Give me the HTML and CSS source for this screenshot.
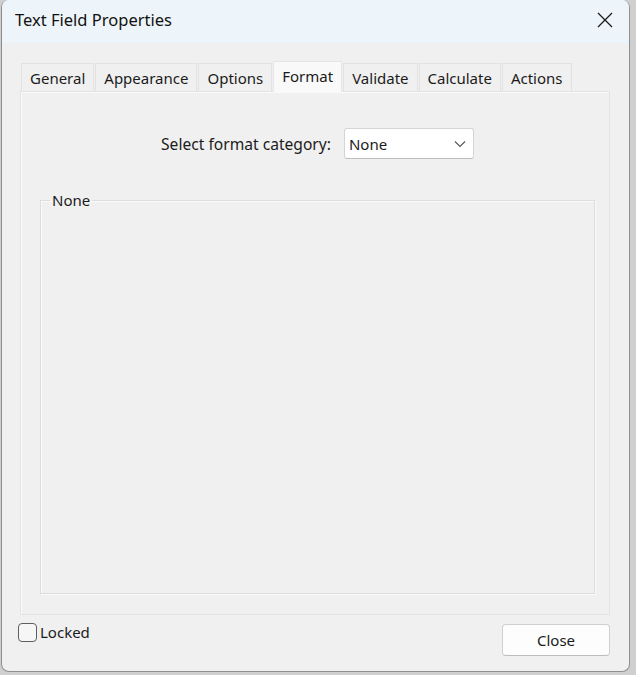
FILE: index.html
```html
<html lang="en">
<head>
    <meta charset="UTF-8">
    <meta name="viewport" content="width=device-width, initial-scale=1.0">
    <title>Text Field Properties</title>
    <link rel="stylesheet" href="styles.css">
</head>
<body>
    <div class="window">
        <div class="titlebar">
            <span class="title">Text Field Properties</span>
            <span class="close_x">
                <svg width="16" height="16" viewBox="0 0 16 16">
                    <path d="M1 1 L15 15 M15 1 L1 15" stroke="#1a1a1a" stroke-width="1.3" fill="none" />
                </svg>
            </span>
        </div>
        <div class="content">
            <div class="tabs">
                <div class="tab">General</div>
                <div class="tab">Appearance</div>
                <div class="tab">Options</div>
                <div class="tab active">Format</div>
                <div class="tab">Validate</div>
                <div class="tab">Calculate</div>
                <div class="tab">Actions</div>
            </div>
            <div class="panel">
                <div class="category_row">
                    <label for="category">Select format category:</label>
                    <div class="select" id="category">
                        <span>None</span>
                        <svg width="12" height="8" viewBox="0 0 12 8">
                            <path d="M1 1.5 L6 6.5 L11 1.5" stroke="#555" stroke-width="1.1" fill="none" />
                        </svg>
                    </div>
                </div>
                <fieldset class="group">
                    <legend>None</legend>
                </fieldset>
            </div>
            <div class="footer">
                <label class="check">
                    <span class="box"></span>
                    <span>Locked</span>
                </label>
                <button class="btn">Close</button>
            </div>
        </div>
    </div>
</body>
</html>
```

FILE: styles.css
```css
html, body {
    margin: 0;
    height: 100%;
}
body {
    background-color: #cfcfcf;
    font-family: "Noto Sans", "Open Sans", sans-serif;
    font-size: 14px;
    color: #1b1b1b;
}
.window {
    width: 627px;
    height: 671px;
    margin-left: 1px;
    background-color: #f0f0f0;
    border: 1px solid #8e8e8e;
    border-top: none;
    border-radius: 8px;
    display: flex;
    flex-direction: column;
    overflow: hidden;
}
.titlebar {
    height: 43px;
    flex: none;
    background-color: #eef5fa;
    display: flex;
    align-items: center;
    justify-content: space-between;
    padding: 0 16px 4px 13px;
    box-sizing: border-box;
}
.title {
    font-size: 16.5px;
    color: #111;
}
.close_x {
    display: flex;
}
.content {
    flex: 1;
    display: flex;
    flex-direction: column;
    padding: 18px 19px 0 18px;
}
.tabs {
    display: flex;
    align-items: flex-end;
    height: 30px;
    padding-left: 1px;
    position: relative;
    z-index: 1;
}
.tab {
    height: 28px;
    box-sizing: border-box;
    padding: 2px 8px 0 8px;
    border: 1px solid #e2e2e2;
    border-bottom: none;
    margin-right: 1px;
    background-color: #f0f0f0;
    display: flex;
    align-items: center;
    font-size: 15px;
    line-height: 1;
}
.tab.active {
    height: 31px;
    margin-bottom: -1px;
    background-color: #f9f9f9;
    border-color: #e6e6e6;
    padding-bottom: 4px;
}
.panel {
    height: 524px;
    box-sizing: border-box;
    border: 1px solid #e3e3e3;
    box-shadow: inset 1px 1px 0 #fafafa;
    background-color: #f0f0f0;
    padding: 0 14px 0 19px;
    display: flex;
    flex-direction: column;
}
.category_row {
    display: flex;
    justify-content: center;
    align-items: center;
    column-gap: 13px;
    margin-top: 36px;
    font-size: 15.6px;
}
.select {
    width: 130px;
    height: 31px;
    box-sizing: border-box;
    background-color: #fff;
    border: 1px solid #d4d4d4;
    border-bottom-color: #bdbdbd;
    border-radius: 3px;
    display: flex;
    align-items: center;
    justify-content: space-between;
    padding: 0 7px 0 4px;
    font-size: 15px;
}
.group {
    margin: 31px 0 0 0;
    padding: 0;
    height: 404px;
    box-sizing: border-box;
    border: 1px solid #dcdcdc;
    box-shadow: 1px 1px 0 #fafafa, inset 1px 1px 0 #fafafa;
}
.group legend {
    margin-left: 9px;
    padding: 0 2px;
    font-size: 15px;
}
.footer {
    display: flex;
    justify-content: space-between;
    align-items: flex-start;
    padding: 9px 0 0 0;
    margin-left: -2px;
}
.check {
    display: flex;
    align-items: center;
    column-gap: 3px;
    margin-top: -2px;
    font-size: 15px;
}
.box {
    width: 19px;
    height: 19px;
    box-sizing: border-box;
    border: 1px solid #5f5f5f;
    border-radius: 4px;
    background-color: #f6f6f6;
}
.btn {
    width: 108px;
    height: 32px;
    background-color: #fdfdfd;
    border: 1px solid #d0d0d0;
    border-bottom-color: #bcbcbc;
    border-radius: 4px;
    font-family: "Noto Sans", "Open Sans", sans-serif;
    font-size: 15px;
    color: #1b1b1b;
}
```
